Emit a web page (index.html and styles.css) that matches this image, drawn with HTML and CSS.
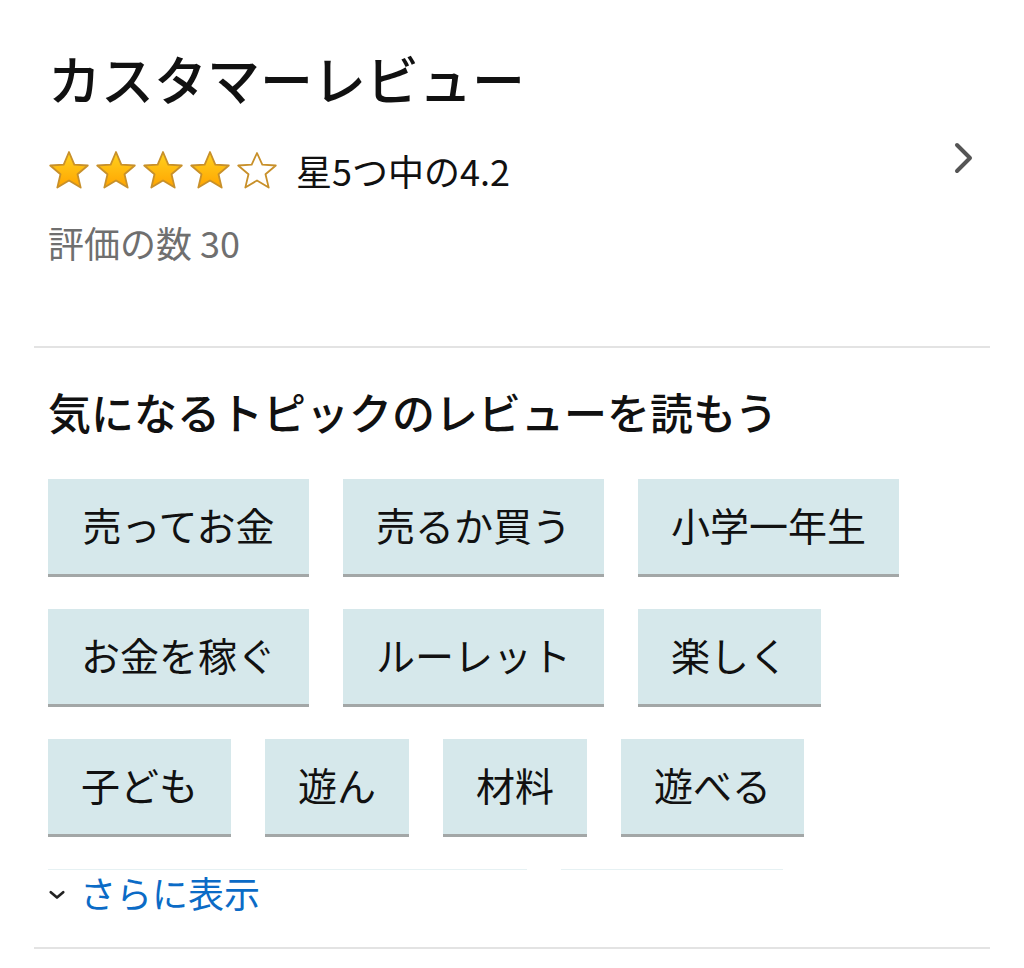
FILE: index.html
```html
<!DOCTYPE html>
<html lang="ja">
<head>
<meta charset="utf-8">
<title>カスタマーレビュー</title>
<link rel="stylesheet" href="styles.css">
</head>
<body>
<div class="page">
  <section class="summary">
    <h2 class="title">カスタマーレビュー</h2>
    <div class="rating-row">
      <div class="stars">
        <svg class="star" viewBox="0 0 42 40"><defs><linearGradient id="g" x1="0" y1="0" x2="0" y2="1"><stop offset="0" stop-color="#ffd21f"/><stop offset="1" stop-color="#ffa400"/></linearGradient></defs><path d="M21 2 L26.3 14.6 L39.8 15.5 L29.5 24.3 L32.7 37.6 L21 30.5 L9.3 37.6 L12.5 24.3 L2.2 15.5 L15.7 14.6 Z" fill="url(#g)" stroke="#c8902a" stroke-width="1.8" stroke-linejoin="round"/></svg>
        <svg class="star" viewBox="0 0 42 40"><path d="M21 2 L26.3 14.6 L39.8 15.5 L29.5 24.3 L32.7 37.6 L21 30.5 L9.3 37.6 L12.5 24.3 L2.2 15.5 L15.7 14.6 Z" fill="url(#g)" stroke="#c8902a" stroke-width="1.8" stroke-linejoin="round"/></svg>
        <svg class="star" viewBox="0 0 42 40"><path d="M21 2 L26.3 14.6 L39.8 15.5 L29.5 24.3 L32.7 37.6 L21 30.5 L9.3 37.6 L12.5 24.3 L2.2 15.5 L15.7 14.6 Z" fill="url(#g)" stroke="#c8902a" stroke-width="1.8" stroke-linejoin="round"/></svg>
        <svg class="star" viewBox="0 0 42 40"><path d="M21 2 L26.3 14.6 L39.8 15.5 L29.5 24.3 L32.7 37.6 L21 30.5 L9.3 37.6 L12.5 24.3 L2.2 15.5 L15.7 14.6 Z" fill="url(#g)" stroke="#c8902a" stroke-width="1.8" stroke-linejoin="round"/></svg>
        <svg class="star" viewBox="0 0 42 40"><path d="M21 3 L26.3 14.6 L39.8 15.5 L29.5 24.3 L32.7 37.6 L21 30.5 L9.3 37.6 L12.5 24.3 L2.2 15.5 L15.7 14.6 Z" fill="#fff" stroke="#c8902a" stroke-width="1.8" stroke-linejoin="round"/></svg>
      </div>
      <span class="rating-text">星5つ中の4.2</span>
      <svg class="chev-right" viewBox="0 0 28 34"><path d="M9 3 L22 16 L9 29" fill="none" stroke="#555" stroke-width="4" stroke-linecap="round" stroke-linejoin="round"/></svg>
    </div>
    <div class="count">評価の数 30</div>
  </section>
  <div class="divider"></div>
  <section class="topics">
    <h3 class="topics-title">気になるトピックのレビューを読もう</h3>
    <div class="chips">
      <span class="chip">売ってお金</span>
      <span class="chip">売るか買う</span>
      <span class="chip">小学一年生</span>
      <span class="chip">お金を稼ぐ</span>
      <span class="chip">ルーレット</span>
      <span class="chip">楽しく</span>
      <span class="chip">子ども</span>
      <span class="chip">遊ん</span>
      <span class="chip">材料</span>
      <span class="chip">遊べる</span>
      <span class="chip chip-ghost chip-ghost-wide"></span>
      <span class="chip chip-ghost chip-ghost-narrow"></span>
    </div>
    <a class="more" href="#">
      <svg class="chev-down" viewBox="0 0 16 10"><path d="M1.8 2.2 L8 7.6 L14.2 2.2" fill="none" stroke="#222" stroke-width="2.6" stroke-linecap="round" stroke-linejoin="round"/></svg>
      <span>さらに表示</span>
    </a>
  </section>
  <div class="divider"></div>
</div>
</body>
</html>
```

FILE: styles.css
```css
html, body {
  margin: 0;
  padding: 0;
  background: #fff;
}

body {
  font-family: "Noto Sans CJK JP", "Noto Sans", sans-serif;
  color: #111;
}

.page {
  padding: 0 34px;
}

.summary {
  padding: 46px 14px 82px;
}

.title {
  margin: 0;
  font-size: 53px;
  line-height: 64px;
  font-weight: 500;
  color: #111;
}

.rating-row {
  display: flex;
  align-items: center;
  height: 48px;
  margin-top: 36px;
}

.stars {
  display: flex;
  gap: 5px;
}

.star {
  width: 42px;
  height: 40px;
  display: block;
}

.rating-text {
  margin-left: 18px;
  font-size: 36px;
  line-height: 48px;
  color: #111;
}

.chev-right {
  width: 28px;
  height: 34px;
  margin-left: auto;
  align-self: flex-start;
  margin-top: -4px;
}

.count {
  margin-top: 26px;
  font-size: 36px;
  line-height: 44px;
  color: #6f6f6f;
}

.divider {
  height: 2px;
  background: #e3e3e3;
}

.topics {
  padding: 37px 14px 33px;
}

.topics-title {
  margin: 0;
  font-size: 43px;
  line-height: 52px;
  font-weight: 500;
  color: #111;
}

.chips {
  display: flex;
  flex-wrap: wrap;
  column-gap: 34px;
  row-gap: 32px;
  margin-top: 42px;
  max-height: 391px;
  overflow: hidden;
}

.chip {
  display: block;
  box-sizing: border-box;
  min-width: 261px;
  height: 98px;
  line-height: 91px;
  padding: 0 33px;
  font-size: 39px;
  text-align: center;
  color: #111;
  background: #d6e8eb;
  border-bottom: 3px solid #a3a7a7;
  white-space: nowrap;
}

.chip:nth-child(n+6) {
  min-width: 0;
}

.chip-ghost {
  padding: 0;
  background: #e6f1f3;
}

.chip-ghost-wide {
  width: 479px;
}

.chip-ghost-narrow {
  width: 222px;
}

.more {
  display: flex;
  align-items: center;
  height: 44px;
  text-decoration: none;
  color: #0b6bc6;
  font-size: 36px;
  line-height: 44px;
}

.chev-down {
  width: 16px;
  height: 10px;
  margin-left: 1px;
  margin-right: 15px;
  margin-top: 6px;
}
```
